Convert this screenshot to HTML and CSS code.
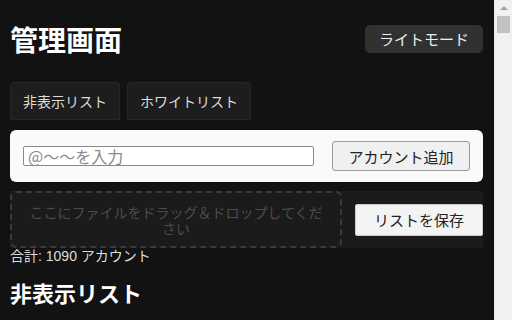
FILE: index.html
```html
<!DOCTYPE html>
<html lang="ja">

<head>
    <meta charset="UTF-8">
    <meta name="viewport" content="width=device-width, initial-scale=1.0">
    <title>管理画面</title>
    <link rel="stylesheet" href="styles.css">
</head>

<body>
    <div class="header">
        <h1>管理画面</h1>
        <button class="mode-btn">ライトモード</button>
    </div>

    <div class="tabs">
        <button class="tab">非表示リスト</button>
        <button class="tab">ホワイトリスト</button>
    </div>

    <div class="add-box">
        <input type="text" class="account-input" placeholder="@～～を入力">
        <button class="add-btn">アカウント追加</button>
    </div>

    <div class="file-row">
        <div class="drop-zone">ここにファイルをドラッグ＆ドロップしてください</div>
        <button class="save-btn">リストを保存</button>
    </div>
    <div class="total">合計: 1090 アカウント</div>

    <h2>非表示リスト</h2>

    <!-- window scrollbar -->
    <div class="scrollbar">
        <div class="scroll-arrow"></div>
        <div class="scroll-thumb"></div>
    </div>
</body>

</html>
```

FILE: styles.css
```css
html {
    overflow: hidden;
}

body {
    font-family: "Liberation Sans", "Noto Sans CJK JP", sans-serif;
    margin: 0;
    padding: 23px 29px 0 10px;
    background-color: #121212;
    color: #eee;
}

.header {
    display: flex;
    justify-content: space-between;
    align-items: center;
    height: 31px;
}

h1 {
    margin: 0;
    font-family: "Noto Sans CJK JP", sans-serif;
    font-size: 28px;
    font-weight: bold;
    color: #fff;
}

button {
    font-family: "Noto Sans CJK JP", sans-serif;
    cursor: pointer;
}

.mode-btn {
    height: 28px;
    padding: 0 14px;
    background-color: #313131;
    color: #eee;
    border: none;
    border-radius: 5px;
    font-size: 15px;
}

.tabs {
    display: flex;
    gap: 7px;
    margin-top: 28px;
}

.tab {
    height: 38px;
    padding: 0 12px;
    background-color: #1d1d1d;
    color: #ddd;
    border: 1px solid #262626;
    border-radius: 4px 4px 0 0;
    font-size: 14px;
}

.add-box {
    display: flex;
    align-items: center;
    gap: 18px;
    margin-top: 10px;
    padding: 11px 13px;
    background-color: #fafafa;
    border-radius: 6px;
}

.account-input {
    width: 291px;
    height: 20px;
    box-sizing: border-box;
    padding: 0 4px;
    border: 1px solid #8a8a8a;
    border-radius: 2px;
    font-family: "Noto Sans CJK JP", sans-serif;
    font-size: 16px;
    line-height: 18px;
}

.account-input::placeholder {
    color: #8a8a8a;
}

.add-btn {
    width: 138px;
    height: 30px;
    background-color: #f0f0f0;
    color: #222;
    border: 1px solid #999;
    border-radius: 3px;
    font-size: 15px;
}

.file-row {
    display: flex;
    align-items: center;
    gap: 13px;
    margin-top: 9px;
    background-color: #1b1b1b;
}

.drop-zone {
    width: 332px;
    height: 57px;
    box-sizing: border-box;
    display: flex;
    align-items: center;
    justify-content: center;
    padding: 0 14px;
    border: 2px dashed #3b3b3b;
    border-radius: 6px;
    color: #4c4c4c;
    font-family: "Noto Sans CJK JP", sans-serif;
    font-size: 14px;
    line-height: 16px;
    text-align: center;
}

.save-btn {
    width: 128px;
    height: 32px;
    background-color: #f3f3f3;
    color: #222;
    border: 1px solid #ccc;
    border-radius: 2px;
    font-size: 15px;
}

.total {
    font-size: 14px;
    color: #ddd;
    line-height: 16px;
}

h2 {
    margin: 12px 0 0;
    font-family: "Noto Sans CJK JP", sans-serif;
    font-size: 22px;
    font-weight: bold;
    color: #fff;
}

.scrollbar {
    position: fixed;
    top: 0;
    right: 0;
    bottom: 0;
    width: 17px;
    background-color: #f1f1f1;
    border-left: 1px solid #e6e6e6;
}

.scroll-arrow {
    width: 0;
    height: 0;
    margin: 6px auto 0;
    border-left: 4px solid transparent;
    border-right: 4px solid transparent;
    border-bottom: 4px solid #a3a3a3;
}

.scroll-thumb {
    height: 17px;
    margin: 6px 2px 0;
    background-color: #c1c1c1;
}
```
